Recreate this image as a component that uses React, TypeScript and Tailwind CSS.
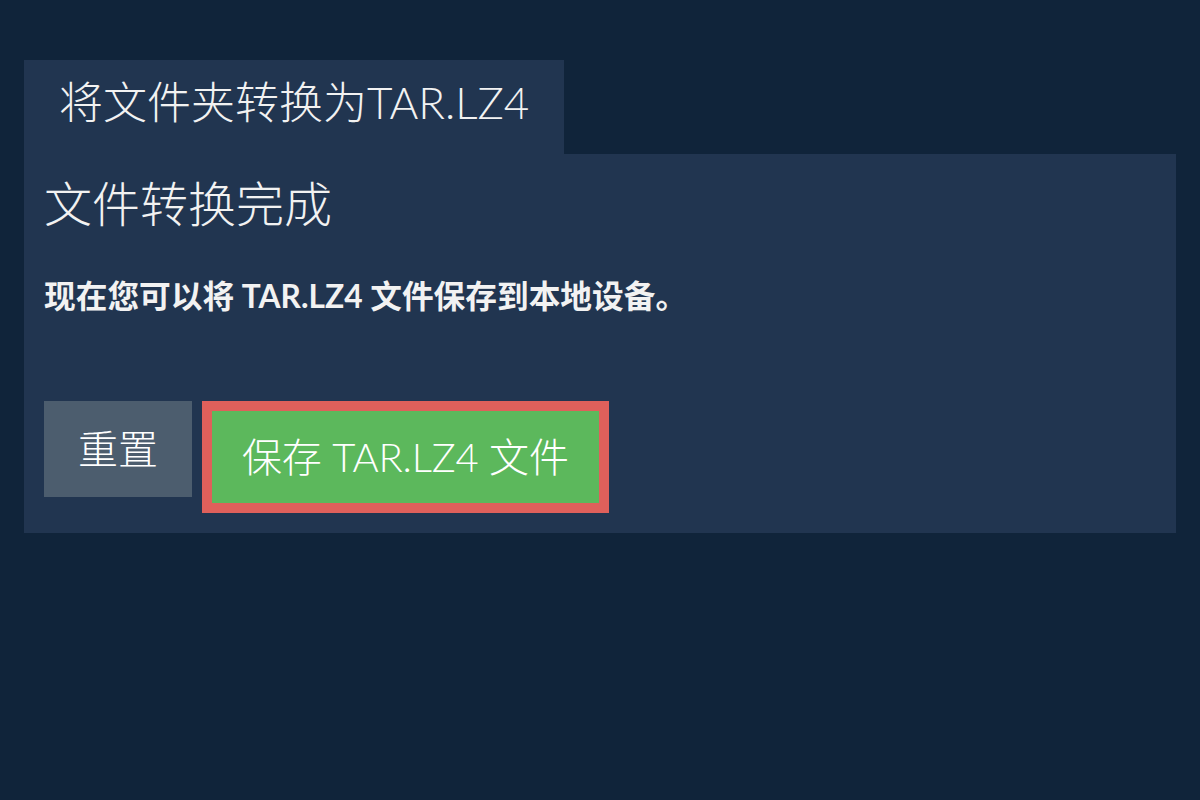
export default function App() {
  const font = { fontFamily: 'Lato, "Noto Sans CJK SC", sans-serif' };
  return (
    <div className="min-h-screen w-full bg-[#10243a] pt-[60px] px-6" style={font}>
      <div className="inline-flex h-[94px] items-center bg-[#213550] px-[35px] pb-[10px]">
        <span className="text-[44px] font-light text-[#f2f2f2]">将文件夹转换为TAR.LZ4</span>
      </div>
      <div className="bg-[#213550] px-5 pt-[21px] pb-5">
        <h2 className="text-[48px] font-light leading-[1.2] text-[#f2f2f2]">文件转换完成</h2>
        <p className="mt-[40px] text-[31.7px] font-bold leading-[1.5] text-[#f2f2f2]">
          现在您可以将 TAR.LZ4 文件保存到本地设备。
        </p>
        <div className="mt-[81px] flex items-start gap-[10px]">
          <button className="h-[96px] w-[148px] bg-[#4c5d6e] text-[40px] font-light text-white">
            重置
          </button>
          <button className="h-[112px] border-[10px] border-[#df605b] bg-[#5cb85c] px-[30px] text-[40px] font-light tracking-[-0.2px] text-white">
            保存 TAR.LZ4 文件
          </button>
        </div>
      </div>
    </div>
  );
}
